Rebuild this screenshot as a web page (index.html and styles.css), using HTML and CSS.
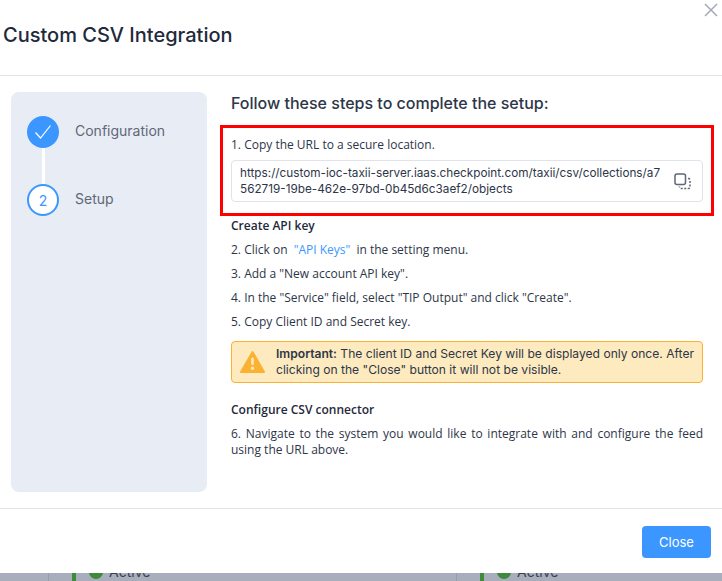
FILE: index.html
```html
<!DOCTYPE html>
<html lang="en">
  <head>
    <meta charset="UTF-8" />
    <title>Custom CSV Integration</title>
    <link rel="stylesheet" href="styles.css">
  </head>
  <body>
    <div class="modal">
      <svg class="close-x" width="14" height="14" viewBox="0 0 14 14">
        <path d="M1 1L13 13M13 1L1 13" stroke="#a3a9b8" stroke-width="1.5" fill="none" />
      </svg>
      <h2 class="modal-title">Custom CSV Integration</h2>

      <div class="modal-body">
        <div class="stepper">
          <div class="step">
            <span class="step-circle step-done">
              <svg width="18" height="16" viewBox="0 0 18 16">
                <path d="M1.5 8.5L6.5 14L16.5 1.5" stroke="#fff" stroke-width="1.2" fill="none" />
              </svg>
            </span>
            <span class="step-label">Configuration</span>
          </div>
          <div class="step-line"></div>
          <div class="step">
            <span class="step-circle step-current">2</span>
            <span class="step-label">Setup</span>
          </div>
        </div>

        <div class="content">
          <h3 class="content-title">Follow these steps to complete the setup:</h3>

          <div class="highlight">
            <p class="line line-first">1. Copy the URL to a secure location.</p>
            <div class="url-box">
              <span class="url-text">https://custom-ioc-taxii-server.iaas.checkpoint.com/taxii/csv/collections/a7562719-19be-462e-97bd-0b45d6c3aef2/objects</span>
              <svg class="copy-icon" width="17" height="17" viewBox="0 0 17 17" fill="none">
                <rect x="1" y="1" width="10.500" height="10.500" rx="2" stroke="#5f6675" stroke-width="1.500" />
                <path d="M14 5.500h.5a1.500 1.500 0 0 1 1.500 1.500v7a1.500 1.500 0 0 1-1.500 1.500H7a1.500 1.500 0 0 1-1.500-1.500V13.500" stroke="#5f6675" stroke-width="1.500" stroke-dasharray="2 1.500" />
              </svg>
            </div>
          </div>

          <h4 class="sub-title sub-first">Create API key</h4>
          <p class="line">2. Click on <a class="link">"API Keys"</a> in the setting menu.</p>
          <p class="line">3. Add a "New account API key".</p>
          <p class="line">4. In the "Service" field, select "TIP Output" and click "Create".</p>
          <p class="line">5. Copy Client ID and Secret key.</p>

          <div class="alert">
            <svg class="alert-icon" width="25" height="24" viewBox="0 0 25 24">
              <path d="M12.500 2L24 22H1Z" fill="#fbb131" stroke="#fbb131" stroke-width="2" stroke-linejoin="round" />
              <rect x="11.200" y="7.500" width="2.600" height="7.500" rx="1.200" fill="#fdeabf" />
              <circle cx="12.500" cy="18.300" r="1.700" fill="#fdeabf" />
            </svg>
            <p class="alert-text"><b>Important:</b> The client ID and Secret Key will be displayed only once. After clicking on the "Close" button it will not be visible.</p>
          </div>

          <h4 class="sub-title sub-second">Configure CSV connector</h4>
          <p class="line line-justify">6. Navigate to the system you would like to integrate with and configure the feed using the URL above.</p>
        </div>
      </div>

      <div class="modal-footer">
        <button class="close-btn">Close</button>
      </div>
    </div>

    <!--Page behind the modal, only its top edge shows-->
    <div class="backdrop">
      <div class="bg-card bg-card-left">
        <span class="bg-bar"></span>
        <span class="bg-dot"></span>
        <span class="bg-status">Active</span>
      </div>
      <div class="bg-card bg-card-right">
        <span class="bg-bar"></span>
        <span class="bg-dot"></span>
        <span class="bg-status">Active</span>
      </div>
    </div>
  </body>
</html>
```

FILE: styles.css
```css
* {
  box-sizing: border-box;
}
html,
body {
  margin: 0;
  height: 100%;
}
body {
  font-family: Inter, "Liberation Sans", sans-serif;
  color: #2d3648;
  background-color: #a9aeba;
  overflow: hidden;
}
/* Modal */
.modal {
  position: relative;
  height: 573px;
  background-color: #fff;
}
.close-x {
  position: absolute;
  top: 3px;
  right: 4px;
}
.modal-title {
  margin: 0;
  height: 76px;
  padding: 23px 0 0 3px;
  font-size: 20px;
  line-height: 24px;
  font-weight: 500;
  color: #1f2a3c;
  border-bottom: 1px solid #e1e3ea;
}
.modal-body {
  display: flex;
  height: 433px;
  padding: 16px 19px 16px 11px;
  border-bottom: 1px solid #e1e3ea;
}
/* Stepper */
.stepper {
  width: 196px;
  flex-shrink: 0;
  background-color: #e8ecf5;
  border-radius: 8px;
  padding: 24px 16px;
}
.step {
  display: flex;
  align-items: center;
  gap: 16px;
}
.step-circle {
  width: 32px;
  height: 32px;
  border-radius: 50%;
  display: flex;
  align-items: center;
  justify-content: center;
  flex-shrink: 0;
  font-size: 14px;
}
.step-done {
  background-color: #3b97ff;
}
.step-current {
  background-color: #fff;
  border: 2px solid #3b97ff;
  color: #3b97ff;
}
.step-line {
  width: 3px;
  height: 36px;
  margin-left: 15px;
  background-color: #fff;
}
.step-label {
  font-size: 14px;
  line-height: 20px;
  margin-bottom: 2px;
  color: #5f6778;
}
/* Right side */
.content {
  flex: 1;
  margin-left: 24px;
}
.content-title {
  margin: 0 0 11px;
  font-size: 16px;
  line-height: 22px;
  font-weight: 500;
  color: #2d3648;
}
.highlight {
  margin: 0 -11px 0 -11px;
  padding: 9px 8px 11px 8px;
  border: 3px solid #ff0000;
}
.line {
  margin: 0 0 8px;
  font-family: "Open Sans", sans-serif;
  font-size: 12px;
  line-height: 16px;
  color: #2d3648;
}
.line-first {
  margin-bottom: 7px;
}
.line-justify {
  text-align: justify;
}
.url-box {
  display: flex;
  align-items: center;
  gap: 12px;
  height: 42px;
  padding: 0 11px 0 8px;
  border: 1px solid #e1e3ea;
  border-radius: 4px;
}
.url-text {
  font-size: 11.750px;
  line-height: 16px;
  word-break: break-all;
}
.copy-icon {
  flex-shrink: 0;
}
.sub-title {
  margin: 0 0 8px;
  font-family: "Open Sans", sans-serif;
  font-size: 12px;
  line-height: 16px;
  font-weight: 600;
  color: #1f2a3c;
}
.sub-first {
  margin-top: 2px;
}
.sub-second {
  margin-top: 19px;
}
.link {
  color: #3b97ff;
  margin: 0 3px;
}
/* Warning */
.alert {
  display: flex;
  align-items: center;
  gap: 11px;
  height: 42px;
  padding: 0 7px 0 8px;
  background-color: #fdeabf;
  border: 1px solid #fbb131;
  border-radius: 4px;
  margin-top: 11px;
}
.alert-icon {
  flex-shrink: 0;
}
.alert-text {
  margin: 0;
  font-size: 12.100px;
  line-height: 16px;
}
.alert-text b {
  font-weight: 600;
}
/* Footer */
.modal-footer {
  display: flex;
  justify-content: flex-end;
  padding: 17px 11px 0 0;
}
.close-btn {
  width: 69px;
  height: 32px;
  background-color: #3b97ff;
  border: none;
  border-radius: 4px;
  color: #fff;
  font-family: inherit;
  font-size: 13px;
}
/* Dimmed cards under the modal */
.backdrop {
  display: flex;
  height: 8px;
  padding-left: 48px;
  background-color: #a8aebc;
}
.bg-card {
  display: flex;
  align-items: flex-end;
  height: 8px;
  width: 408px;
  padding: 0 0 2px 23px;
  border-left: 1px solid #989eae;
  color: #3a4152;
  font-size: 14px;
  line-height: 14px;
}
.bg-card-right {
  width: 266px;
}
.bg-bar {
  width: 4px;
  height: 8px;
  margin-bottom: -2px;
  margin-right: 13px;
  background-color: #3f8a3c;
  flex-shrink: 0;
}
.bg-dot {
  width: 14px;
  height: 14px;
  margin-right: 6px;
  border-radius: 50%;
  background-color: #3f8a3c;
  flex-shrink: 0;
}
```
